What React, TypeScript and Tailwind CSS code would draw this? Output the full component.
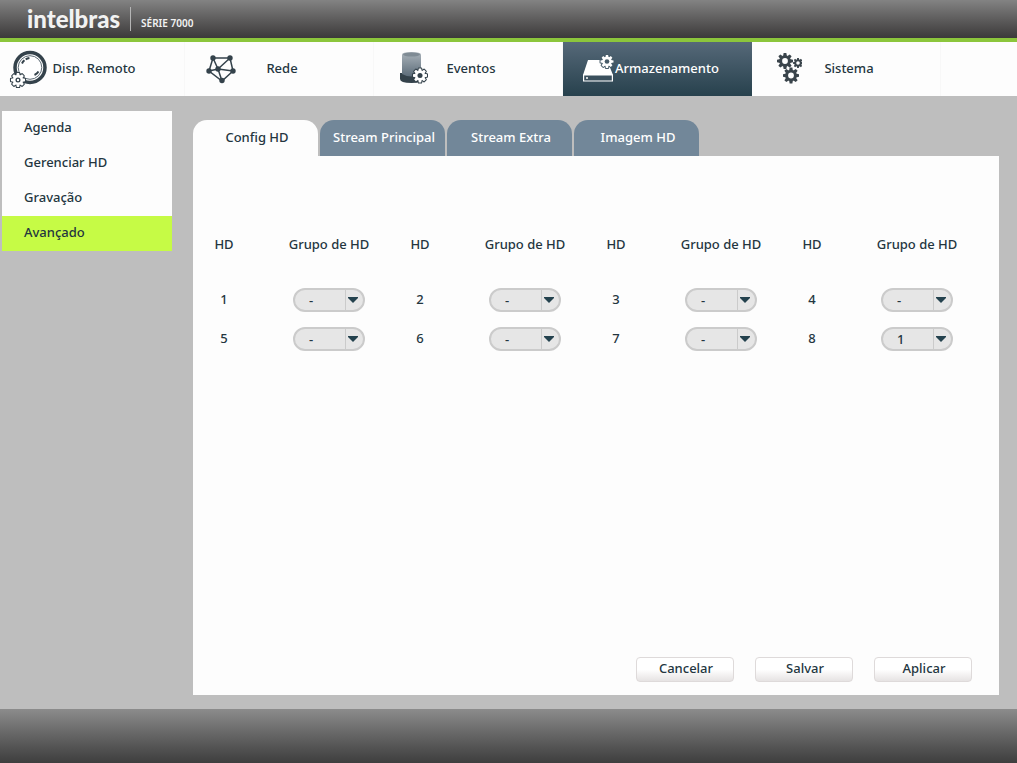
import React, { useState } from 'react';

const GEAR_ANGLES = [0, 45, 90, 135, 180, 225, 270, 315];

type GearProps = {
  cx: number;
  cy: number;
  r: number;
  fill: string;
  hole: string;
  stroke?: string;
};

const Gear = ({ cx, cy, r, fill, hole, stroke }: GearProps) => (
  <g transform={`translate(${cx} ${cy}) scale(${r / 10})`}>
    {stroke && (
      <g fill={stroke} stroke={stroke} strokeWidth="3" strokeLinejoin="round">
        <circle r="7.2" />
        {GEAR_ANGLES.map((a) => (
          <path key={a} d="M-2.4 -6 L-1.7 -10 H1.7 L2.4 -6 Z" transform={`rotate(${a})`} />
        ))}
      </g>
    )}
    <g fill={fill}>
      <circle r="7.2" />
      {GEAR_ANGLES.map((a) => (
        <path key={a} d="M-2.4 -6 L-1.7 -10 H1.7 L2.4 -6 Z" transform={`rotate(${a})`} />
      ))}
    </g>
    <circle r="3.6" fill={hole} />
  </g>
);

const RemoteIcon = () => (
  <svg width="38" height="40" viewBox="0 0 38 40" className="shrink-0" aria-hidden="true">
    <circle cx="21" cy="18.5" r="15" fill="#fff" stroke="#34424b" strokeWidth="3.5" />
    <circle cx="21" cy="18.5" r="11.8" fill="none" stroke="#5d6b75" strokeWidth="1" />
    <path d="M13 14.5 A10 10 0 0 1 20.5 9" fill="none" stroke="#34424b" strokeWidth="2" strokeDasharray="4 1.5" />
    <path d="M25.5 26 A9 9 0 0 0 29.5 22.5" fill="none" stroke="#34424b" strokeWidth="2" />
    <Gear cx={9} cy={31} r={7} fill="#fff" hole="#34424b" stroke="#34424b" />
    <circle cx="9" cy="31" r="1.2" fill="#fff" />
  </svg>
);

const NetworkIcon = () => (
  <svg width="30" height="30" viewBox="-1 0 30 30" className="shrink-0" aria-hidden="true">
    <path
      d="M6 4 H23 L26 17 L15 27 L2 17 Z M11 15 L6 4 M11 15 L23 4 M11 15 L26 17 M11 15 L15 27 M11 15 L2 17"
      fill="none"
      stroke="#34424b"
      strokeWidth="1.5"
    />
    <g fill="#34424b">
      <circle cx="6" cy="4" r="2.7" />
      <circle cx="23" cy="4" r="2.7" />
      <circle cx="26" cy="17" r="2.7" />
      <circle cx="15" cy="26.5" r="2.7" />
      <circle cx="2" cy="17" r="2.7" />
      <circle cx="11" cy="15" r="2.7" />
    </g>
  </svg>
);

const EventsIcon = () => (
  <svg width="36" height="34" viewBox="-8 1 36 34" className="shrink-0" aria-hidden="true">
    <defs>
      <linearGradient id="siren" x1="0" y1="0" x2="0" y2="1">
        <stop offset="0" stopColor="#aab3ba" />
        <stop offset="1" stopColor="#5c6c79" />
      </linearGradient>
    </defs>
    <path d="M0 22 H23 V28 Q23 32 11.5 32 Q0 32 0 28 Z" fill="#34424b" />
    <path d="M2 3.5 Q2 1 11.5 1 Q21 1 21 3.5 V23 Q11.5 28 2 23 Z" fill="url(#siren)" />
    <ellipse cx="11.5" cy="3.5" rx="8.5" ry="2" fill="#7f8b94" />
    <Gear cx={20} cy={24.5} r={7} fill="#fff" hole="#34424b" stroke="#34424b" />
  </svg>
);

const StorageIcon = () => (
  <svg width="34" height="30" viewBox="0 0 34 30" className="shrink-0" aria-hidden="true">
    <path d="M6 6 H25 L31 21 H1 Z" fill="#fff" />
    <path d="M1.6 21 H30.4 V27 H1.6 Z" fill="#3b505d" stroke="#fff" strokeWidth="1.2" />
    <circle cx="5" cy="24" r="1" fill="#fff" />
    <Gear cx={25} cy={7.5} r={6.5} fill="#fff" hole="#475c69" stroke="#475c69" />
  </svg>
);

const SystemIcon = () => (
  <svg width="28" height="32" viewBox="-2 2 28 32" className="shrink-0" aria-hidden="true">
    <Gear cx={9} cy={10} r={8} fill="#3a444b" hole="#fff" />
    <Gear cx={22} cy={12} r={5} fill="#3a444b" hole="#fff" />
    <Gear cx={15} cy={24.5} r={8} fill="#3a444b" hole="#fff" />
  </svg>
);

const menu = [
  { label: 'Disp. Remoto', Icon: RemoteIcon },
  { label: 'Rede', Icon: NetworkIcon },
  { label: 'Eventos', Icon: EventsIcon },
  { label: 'Armazenamento', Icon: StorageIcon },
  { label: 'Sistema', Icon: SystemIcon },
];

const sections = ['Agenda', 'Gerenciar HD', 'Gravação', 'Avançado'];
const tabs = ['Config HD', 'Stream Principal', 'Stream Extra', 'Imagem HD'];
const actions = ['Cancelar', 'Salvar', 'Aplicar'];
const rows = [
  [1, 2, 3, 4],
  [5, 6, 7, 8],
];

const Header = () => (
  <header className="h-[42px] flex items-center border-b-4 border-[#8cc63c] bg-linear-to-b from-[#838383] to-[#3c3a3a] pl-[27px] text-[#f2f2f2]">
    <span className="font-[Lato] text-[24px] leading-6 font-black">intelbras</span>
    <span className="ml-[10px] h-6 w-px bg-[#b5b5b5]"></span>
    <span className="ml-[10px] pt-2 text-[10px] leading-4 font-semibold">SÉRIE 7000</span>
  </header>
);

const Menu = ({ active, onSelect }: { active: string; onSelect: (label: string) => void }) => (
  <nav className="h-[54px] flex flex-row bg-[#fdfdfd]">
    {menu.map(({ label, Icon }) => (
      <button
        key={label}
        onClick={() => onSelect(label)}
        className={`w-[189px] flex items-center border-r pl-5 pr-[46px] first:w-[185px] first:pl-3 first:pr-10 ${
          active === label
            ? 'border-transparent bg-linear-to-b from-[#566979] to-[#27414d] bg-origin-border text-white'
            : 'border-[#f8f8f8]'
        }`}
      >
        <span className="w-8 shrink-0 flex justify-center">
          <Icon />
        </span>
        <span className="flex-1 pb-[2px] whitespace-nowrap text-center">{label}</span>
      </button>
    ))}
  </nav>
);

const GroupSelect = ({ hd }: { hd: number }) => (
  <span className="relative inline-block h-6 w-[72px] align-middle">
    <select
      aria-label={`Grupo de HD ${hd}`}
      defaultValue={hd === 8 ? '1' : '-'}
      className="h-6 w-full appearance-none rounded-full border-2 border-[#cbcbcb] bg-[#e6e6e6] pb-[2px] pl-[14px] leading-5"
    >
      <option>-</option>
      {[1, 2, 3, 4, 5, 6, 7, 8].map((n) => (
        <option key={n}>{n}</option>
      ))}
    </select>
    <span className="pointer-events-none absolute inset-y-px right-0 flex w-5 items-center border-l border-[#cbcbcb] pl-[2px]">
      <svg width="10" height="6" viewBox="0 0 10 6" aria-hidden="true">
        <path d="M0 0 H10 V1 L5 6 L0 1 Z" fill="#24424e" />
      </svg>
    </span>
  </span>
);

const HdTable = () => (
  <table className="w-full table-fixed text-center">
    <thead>
      <tr className="h-[55px]">
        {rows[0].map((n) => (
          <React.Fragment key={n}>
            <th className="w-[62px] pb-[18px] font-medium">HD</th>
            <th className="pb-[18px] pl-[14px] font-medium whitespace-nowrap">Grupo de HD</th>
          </React.Fragment>
        ))}
      </tr>
    </thead>
    <tbody>
      {rows.map((row) => (
        <tr key={row[0]} className="h-[39px]">
          {row.map((hd) => (
            <React.Fragment key={hd}>
              <td className="pb-[2px]">{hd}</td>
              <td className="pl-[14px]">
                <GroupSelect hd={hd} />
              </td>
            </React.Fragment>
          ))}
        </tr>
      ))}
    </tbody>
  </table>
);

const App = () => {
  const [page, setPage] = useState('Armazenamento');
  const [section, setSection] = useState('Avançado');
  const [tab, setTab] = useState('Config HD');

  return (
    <div className="min-h-screen flex flex-col bg-[#bebebe] font-['Noto_Sans',sans-serif] text-[13px] leading-4 font-medium text-[#24363f]">
      <Header />
      <Menu active={page} onSelect={setPage} />
      <div className="flex-1 flex flex-row items-stretch gap-[21px] pl-[2px] pr-[18px] pb-[14px]">
        <aside className="mt-[15px] w-[170px] shrink-0">
          <ul className="bg-[#fdfdfd]">
            {sections.map((name) => (
              <li key={name}>
                <button
                  onClick={() => setSection(name)}
                  className={`h-[35px] w-full pb-1 pl-[22px] text-left ${section === name ? 'bg-[#c6fb45]' : ''}`}
                >
                  {name}
                </button>
              </li>
            ))}
          </ul>
        </aside>
        <main className="mt-6 flex-1 flex flex-col">
          <div className="flex flex-row gap-[2px]">
            {tabs.map((name) => (
              <button
                key={name}
                onClick={() => setTab(name)}
                className={`h-9 w-[125px] rounded-t-[14px] pb-[2px] pl-[3px] whitespace-nowrap ${
                  tab === name ? 'bg-[#fdfdfd]' : 'bg-[#728799] text-white'
                }`}
              >
                {name}
              </button>
            ))}
          </div>
          <div className="flex-1 flex flex-col justify-between bg-[#fdfdfd] pt-[69px]">
            <div className="pr-[22px]">
              <HdTable />
            </div>
            <div className="flex flex-row justify-end gap-[21px] pr-[27px] pb-[13px]">
              {actions.map((name) => (
                <button
                  key={name}
                  className="h-[25px] w-[98px] rounded-[4px] border border-[#dedada] bg-linear-to-b from-white from-50% to-[#e6e3e3] pb-1 pl-[2px]"
                >
                  {name}
                </button>
              ))}
            </div>
          </div>
        </main>
      </div>
      <footer className="h-[54px] bg-linear-to-b from-[#8c8c8c] to-[#3e3e3e]"></footer>
    </div>
  );
};

export default App;
